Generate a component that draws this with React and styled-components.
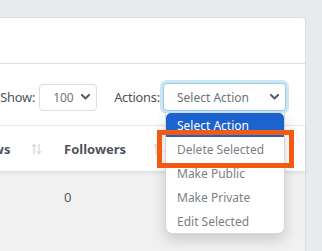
import React from "react";
import styled, { createGlobalStyle } from "styled-components";

const Global = createGlobalStyle`
  html, body { margin: 0; padding: 0; background: #e9eaec; overflow: hidden; }
  body { font-family: "Noto Sans", "Open Sans", sans-serif; }
`;

const Page = styled.div`
  width: 322px;
  height: 251px;
  padding-top: 17px;
  box-sizing: border-box;
  overflow: hidden;
`;

const Card = styled.div`
  margin-left: -40px;
  width: 346px;
  height: 260px;
  background: #fff;
  border: 1px solid #dcdde0;
  border-radius: 4px;
  box-sizing: border-box;
  display: flex;
  flex-direction: column;
`;

const CardHeader = styled.div`
  height: 45px;
  border-bottom: 1px solid #dcdde0;
  flex-shrink: 0;
`;

const Toolbar = styled.div`
  display: flex;
  align-items: center;
  justify-content: flex-end;
  padding: 19px 19px 14px 0;
`;

const Label = styled.span`
  font-size: 12.8px;
  letter-spacing: -0.2px;
  color: #4d5156;
  margin: 0 ${(p) => p.$mr || 0}px 0 ${(p) => p.$ml || 0}px;
`;

const SelectWrap = styled.div`
  position: relative;
`;

const SelectBox = styled.div`
  box-sizing: border-box;
  width: ${(p) => p.$w}px;
  height: ${(p) => (p.$focus ? 28 : 27)}px;
  border: 1px solid ${(p) => (p.$focus ? "#9ccbe6" : "#dcdde0")};
  border-radius: 4px;
  box-shadow: ${(p) => (p.$focus ? "0 0 0 3px #cbe5f2" : "none")};
  display: flex;
  align-items: center;
  justify-content: space-between;
  padding: 0 6px 0 ${(p) => p.$pl}px;
  font-size: 12px;
  color: #6d7378;
  background: #fff;
`;

const Chevron = () => (
  <svg width="9" height="6" viewBox="0 0 9 6">
    <path d="M1 1 L4.5 4.5 L8 1" fill="none" stroke="#555a60" strokeWidth="2" strokeLinecap="round" strokeLinejoin="round" />
  </svg>
);

const Menu = styled.div`
  position: absolute;
  top: 30px;
  left: 2px;
  width: 120px;
  background: #fff;
  border: 1px solid #d6d6d6;
  border-top: none;
  border-radius: 0 0 7px 7px;
  box-shadow: 0 6px 14px rgba(0, 0, 0, 0.16);
  z-index: 5;
  box-sizing: border-box;
`;

const MenuItem = styled.div`
  height: 24px;
  display: flex;
  align-items: center;
  padding-left: 11px;
  font-size: 12px;
  color: ${(p) => (p.$active ? "#fff" : "#7a7f86")};
  background: ${(p) => (p.$active ? "#1c63d0" : "transparent")};
  border-radius: ${(p) => (p.$active ? "5px 5px 0 0" : "0")};
`;

const Highlight = styled.div`
  position: absolute;
  left: -9px;
  top: 17px;
  width: 137px;
  height: 38px;
  border: 5px solid #f35b12;
  box-sizing: border-box;
  pointer-events: none;
`;

const HeadRow = styled.div`
  display: flex;
  height: 45px;
  border-top: 1px solid #e8e8e8;
  box-shadow: 0 2px 4px rgba(0, 0, 0, 0.08);
  position: relative;
  z-index: 1;
  background: #fff;
`;

const HeadCell = styled.div`
  width: ${(p) => p.$w}px;
  box-sizing: border-box;
  padding: 0 10px 0 12px;
  display: flex;
  align-items: center;
  justify-content: space-between;
  font-size: 13px;
  font-weight: 700;
  color: #50555b;
`;

const SortIcon = () => (
  <svg width="11" height="12" viewBox="0 0 11 12">
    <g fill="none" stroke="#c8cbd0" strokeWidth="1" strokeLinecap="round">
      <path d="M3 11 V1.5 M1 3.5 L3 1.5 L5 3.5" />
      <path d="M8 1 V10.5 M6 8.5 L8 10.5 L10 8.5" />
    </g>
  </svg>
);

const Body = styled.div`
  flex: 1;
  background: #f1f1f2;
`;

const BodyRow = styled.div`
  display: flex;
  height: 52px;
  align-items: center;
`;

const BodyCell = styled.div`
  width: ${(p) => p.$w}px;
  box-sizing: border-box;
  padding-left: 12px;
  font-size: 13px;
  color: #55595e;
`;

export default function App() {
  return (
    <>
      <Global />
      <Page>
        <Card>
          <CardHeader />
          <Toolbar>
            <Label $mr={4}>Show:</Label>
            <SelectBox $w={58} $pl={13}>
              100
              <Chevron />
            </SelectBox>
            <Label $ml={17} $mr={3}>Actions:</Label>
            <SelectWrap>
              <SelectBox $w={123} $pl={13} $focus>
                Select Action
                <Chevron />
              </SelectBox>
              <Menu>
                <MenuItem $active>Select Action</MenuItem>
                <MenuItem>Delete Selected</MenuItem>
                <MenuItem>Make Public</MenuItem>
                <MenuItem>Make Private</MenuItem>
                <MenuItem>Edit Selected</MenuItem>
                <Highlight />
              </Menu>
            </SelectWrap>
          </Toolbar>
          <HeadRow>
            <HeadCell $w={91}>
              Views
              <SortIcon />
            </HeadCell>
            <HeadCell $w={122}>
              Followers
              <SortIcon />
            </HeadCell>
          </HeadRow>
          <Body>
            <BodyRow>
              <BodyCell $w={91} />
              <BodyCell $w={122}>0</BodyCell>
            </BodyRow>
          </Body>
        </Card>
      </Page>
    </>
  );
}
